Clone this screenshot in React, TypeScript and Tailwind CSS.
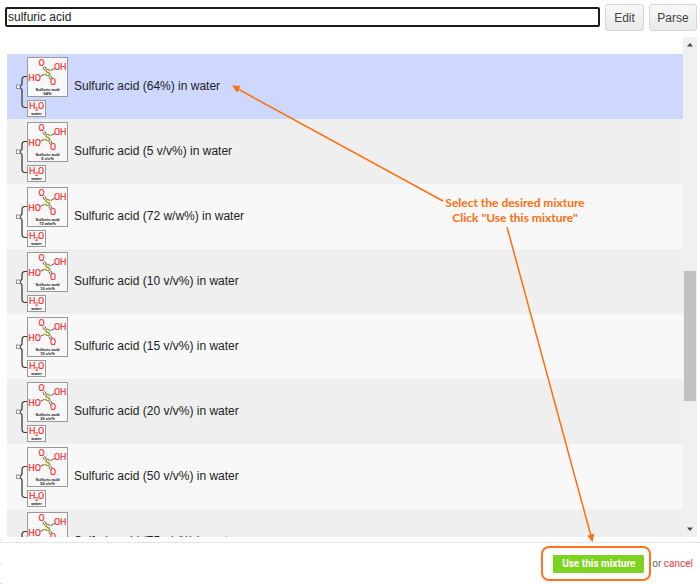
import { useState } from "react";

const MIXTURES = [
  { id: 1, amount: "64%", shade: "bg-[#f7f7f7]" },
  { id: 2, amount: "5 v/v%", shade: "bg-[#efefef]" },
  { id: 3, amount: "72 w/w%", shade: "bg-[#f8f8f8]" },
  { id: 4, amount: "10 v/v%", shade: "bg-[#efefef]" },
  { id: 5, amount: "15 v/v%", shade: "bg-[#f8f8f8]" },
  { id: 6, amount: "20 v/v%", shade: "bg-[#efefef]" },
  { id: 7, amount: "50 v/v%", shade: "bg-[#f8f8f8]" },
  { id: 8, amount: "75 v/v%", shade: "bg-[#efefef]" },
];

const MixtureDiagram = ({ amount }: { amount: string }) => (
  <svg width="54" height="62" viewBox="0 0 54 62" className="shrink-0" aria-hidden="true">
    {/* tree connector */}
    <path
      d="M12.5 20.5 H10 Q7 20.5 7 24 V28 L5 31 L7 34 V48 Q7 51.5 10 51.5 H12.5"
      fill="none"
      stroke="#333"
      strokeWidth="1.2"
    />
    <rect x="1.5" y="29" width="3.5" height="3.5" fill="#fff" stroke="#888" strokeWidth="0.9" />
    <rect x="12.5" y="1.5" width="40" height="39" fill="#f8f8f8" stroke="#999" />
    <rect x="12.5" y="44.5" width="18" height="16" fill="#f8f8f8" stroke="#999" />

    {/* sulfuric acid */}
    <g stroke="#444" strokeWidth="0.9">
      <path d="M27.8 11.2 L29.6 14.2 M29.6 10.2 L31.4 13" />
      <path d="M33.8 20.6 L35.4 23.6 M35.6 19.6 L37.2 22.4" />
      <path d="M35.8 14.6 L39.5 12.4 M25.3 20.4 L29.6 18.2" />
    </g>
    <g fontFamily="Roboto, sans-serif" fontSize="9" fill="#ff2a2a" stroke="#ff2a2a" strokeWidth="0.2" textAnchor="middle">
      <text x="26.7" y="10.2">O</text>
      <text x="45.2" y="14">OH</text>
      <text x="19.6" y="25.2">HO</text>
      <text x="38" y="29.4">O</text>
      <text x="17.2" y="53">H</text>
      <text x="21.6" y="54.6" fontSize="5">2</text>
      <text x="26.2" y="53">O</text>
    </g>
    <text x="32.6" y="19.6" fontFamily="Roboto, sans-serif" fontSize="9" fill="#a39a1c" stroke="#a39a1c" strokeWidth="0.5" textAnchor="middle">
      S
    </text>
    <g fontFamily="'Liberation Sans', sans-serif" fontSize="4" fontWeight="bold" fill="#111" textAnchor="middle">
      <text x="32.5" y="34.5">Sulfuric acid</text>
      <text x="32.5" y="38.5">{amount}</text>
      <text x="21.5" y="58.5">water</text>
    </g>
  </svg>
);

const Callout = () => (
  <div className="pointer-events-none absolute inset-0 overflow-hidden">
    <svg width="700" height="584" viewBox="0 0 700 584" aria-hidden="true">
      <g stroke="#ff6f0f" strokeWidth="1.5">
        <path d="M443 201 L237 88.5" />
        <path d="M507 227 L591 536" />
      </g>
      <path d="M232 85.5 L240.5 86 L237 92.5 Z M592.5 542 L587.3 535.7 L594.3 533.8 Z" fill="#ff6f0f" />
      <path d="M0 539.5 H2 M0 563.5 H2 M0 583.5 H2" stroke="#ddd" />
    </svg>
    <p className="absolute left-[445px] top-[195px] w-[140px] whitespace-nowrap text-center font-['Lato',sans-serif] text-[12px] leading-[15px] font-bold text-[#ff6f0f]">
      Select the desired mixture
      <br />
      Click "Use this mixture"
    </p>
  </div>
);

const toolbarButton =
  "h-[27px] rounded-[3px] border border-[#d6d6d6] bg-linear-to-b from-[#f8f8f8] to-[#e9e9e9] text-[12px] text-[#444]";

export default function App() {
  const [query, setQuery] = useState("sulfuric acid");
  const [selected, setSelected] = useState(1);

  return (
    <div className="relative flex h-screen flex-col overflow-hidden bg-white font-['Liberation_Sans',Arial,sans-serif]">
      <header className="flex items-center gap-[5px] pt-1 pr-[3px] pb-[6px] pl-[5px]">
        <input
          type="text"
          aria-label="Mixture name"
          value={query}
          onChange={(e) => setQuery(e.target.value)}
          className="mb-[2px] h-5 min-w-0 flex-1 rounded-[2px] border-2 border-[#1c1c1c] bg-white px-[1px] text-[12px] leading-4 text-[#222] outline-none"
        />
        <button type="button" className={`${toolbarButton} w-[39px]`}>
          Edit
        </button>
        <button type="button" className={`${toolbarButton} w-12`}>
          Parse
        </button>
      </header>

      <main className="flex min-h-0 flex-1 pr-[3px] pl-[7px]">
        <ul className="min-w-0 flex-1 overflow-hidden pt-[17px]">
          {MIXTURES.map((m) => (
            <li key={m.id}>
              <button
                type="button"
                aria-pressed={selected === m.id}
                onClick={() => setSelected(m.id)}
                className={`flex h-[65px] w-full items-center gap-[5px] pl-2 text-left text-[12px] text-[#222] ${
                  selected === m.id ? "bg-[#ced8ff]" : m.shade
                }`}
              >
                <MixtureDiagram amount={m.amount} />
                <span className="pb-[2px]">Sulfuric acid ({m.amount}) in water</span>
              </button>
            </li>
          ))}
        </ul>

        {/* scrollbar */}
        <div className="flex w-[14px] flex-col items-center bg-[#f0f0f0]" aria-hidden="true">
          <svg width="14" height="14" viewBox="0 0 14 14">
            <path d="M4 9.5 L7 6 L10 9.5 Z" fill="#444" />
          </svg>
          <div className="grow-[220]" />
          <div className="w-3 grow-[130] bg-[#c1c1c1]" />
          <div className="grow-[122]" />
          <svg width="14" height="14" viewBox="0 0 14 14">
            <path d="M4 4.5 L7 8 L10 4.5 Z" fill="#444" />
          </svg>
        </div>
      </main>

      <footer className="mt-[5px] flex h-[42px] items-center justify-end border-t border-[#e4e4e4] pr-[7px] font-['Roboto',sans-serif] text-[10px] text-[#666]">
        <div className="mr-[1px] flex h-[35px] w-[110px] items-center justify-end rounded-[8px] border-2 border-[#ff7420] pr-[5px]">
          <button type="button" className="h-[18px] w-[91px] rounded-[1px] bg-[#7ed321] font-bold text-white">
            Use this mixture
          </button>
        </div>
        <span>
          or{" "}
          <a href="#cancel" className="text-[#e63946]">
            cancel
          </a>
        </span>
      </footer>

      <Callout />
    </div>
  );
}
